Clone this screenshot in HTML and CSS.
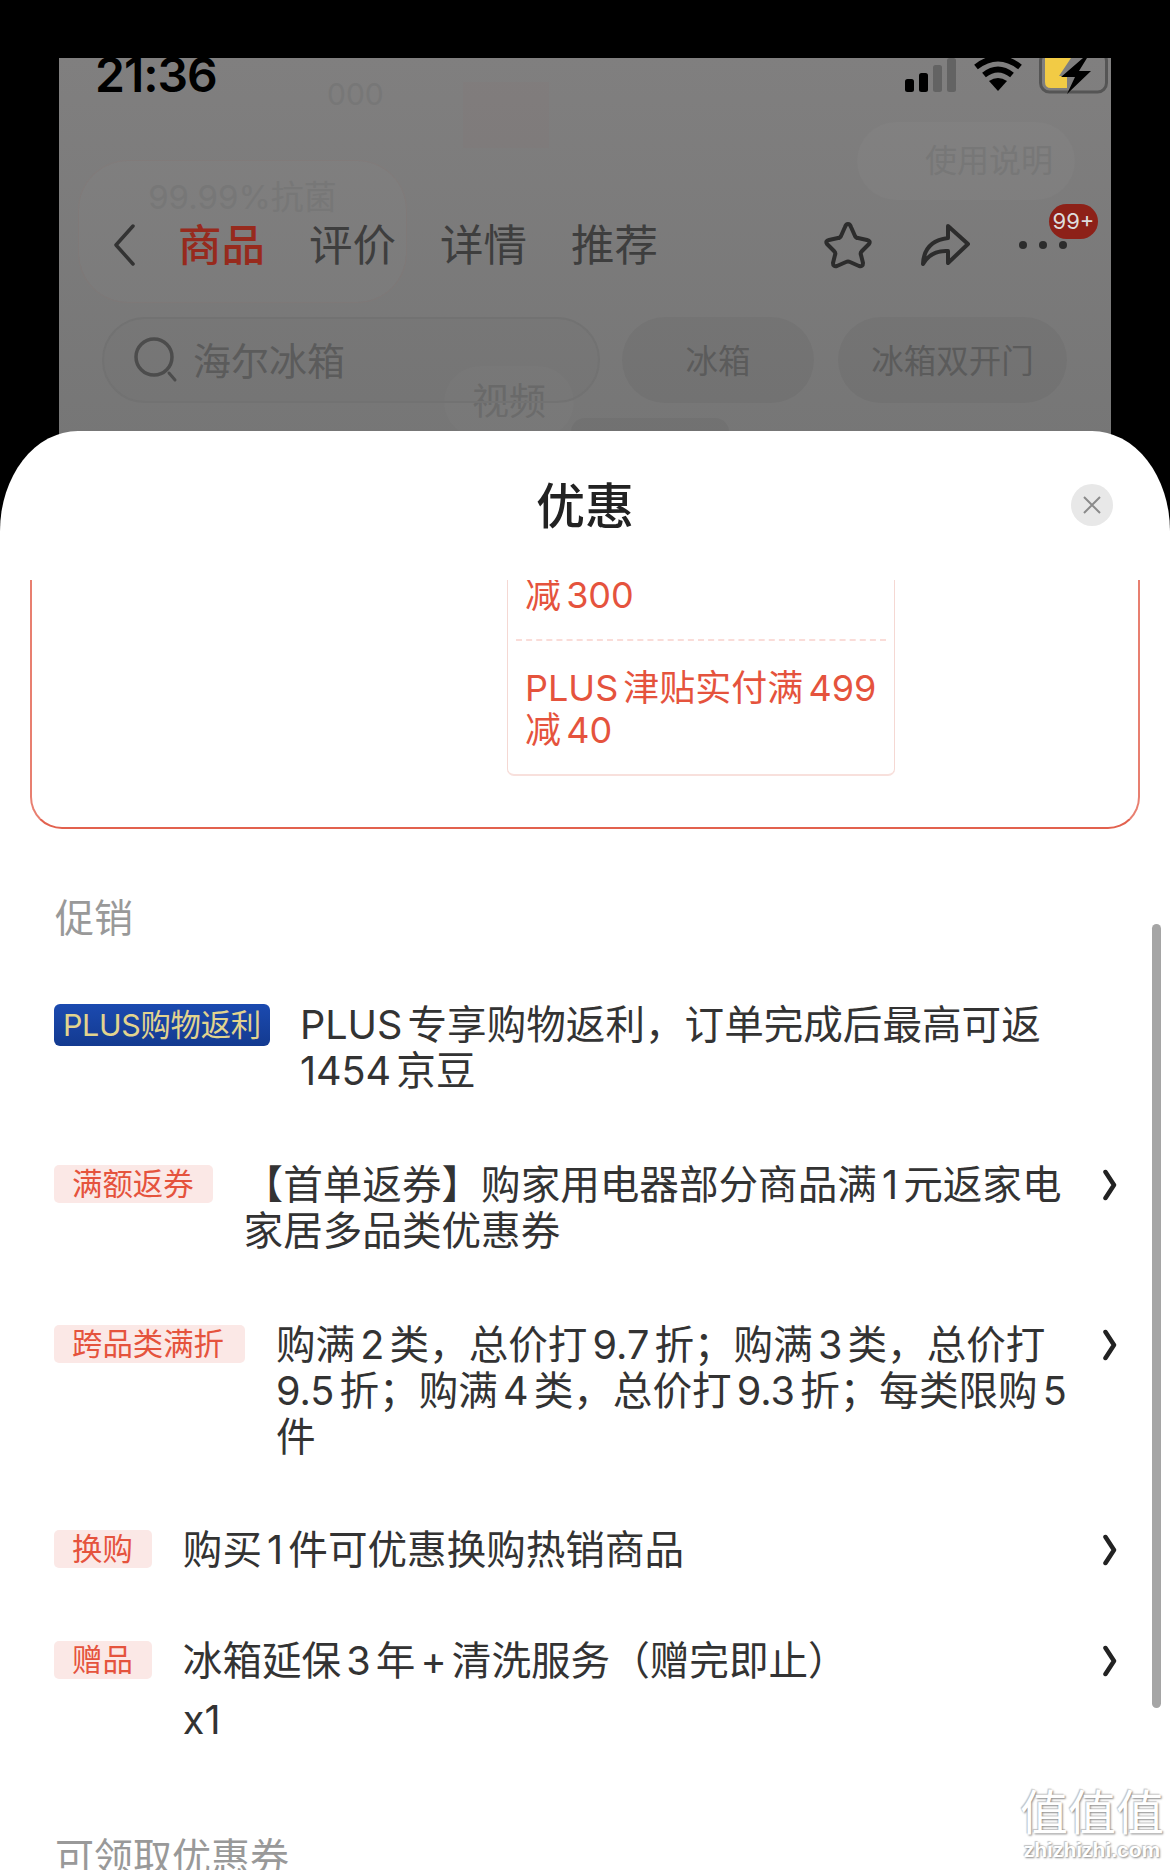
FILE: index.html
```html
<!DOCTYPE html>
<html lang="zh-CN">
<head>
    <meta charset="UTF-8">
    <meta name="viewport" content="width=device-width, initial-scale=1.0">
    <title>优惠</title>
    <link rel="stylesheet" href="styles.css">
</head>
<body>

<div class="backdrop">
    <div class="ghost ghost-left"><span>99.99%抗菌</span></div>
    <div class="ghost ghost-num">000</div>
    <div class="ghost ghost-box"></div>
    <div class="ghost ghost-pill"><span>使用说明</span></div>
    <div class="ghost ghost-video"><span>视频</span></div>
    <div class="ghost ghost-tab"></div>

    <div class="status-bar">
        <span class="time">21:36</span>
        <div class="status-icons">
            <svg class="signal" width="52" height="34" viewBox="0 0 52 34">
                <rect x="0" y="21" width="9" height="13" rx="2.5" fill="#000"/>
                <rect x="14" y="15" width="9" height="19" rx="2.5" fill="#000"/>
                <rect x="28" y="7" width="9" height="27" rx="2.5" fill="#636363"/>
                <rect x="42" y="0" width="9" height="34" rx="2.5" fill="#636363"/>
            </svg>
            <svg class="wifi" width="50" height="34" viewBox="0 0 50 34">
                <path d="M3 9 Q25 -8 47 9" fill="none" stroke="#000" stroke-width="6"/>
                <path d="M11 17 Q25 6 39 17" fill="none" stroke="#000" stroke-width="6"/>
                <path d="M16 23 Q25 17 34 23 L25 33 Z" fill="#000"/>
            </svg>
            <svg class="battery" width="70" height="36" viewBox="0 0 70 36">
                <rect x="1.5" y="-6" width="66" height="40" rx="9" fill="none" stroke="#555" stroke-width="3"/>
                <path d="M6 0 H32 L20 18 H28 V30 H12 Q6 30 6 24 Z" fill="#f2cb45"/>
                <path d="M44 0 L22 19 H36 L28 36 L52 13 H40 L48 0 Z" fill="#000"/>
            </svg>
        </div>
    </div>

    <div class="nav-bar">
        <svg class="nav-back" width="24" height="42" viewBox="0 0 24 42">
            <path d="M21 2 L4 21 L21 40" fill="none" stroke="#333" stroke-width="3.5" stroke-linecap="round" stroke-linejoin="round"/>
        </svg>
        <div class="nav-tabs">
            <span class="nav-tab active">商品</span>
            <span class="nav-tab">评价</span>
            <span class="nav-tab">详情</span>
            <span class="nav-tab">推荐</span>
        </div>
        <div class="nav-actions">
            <svg width="50" height="48" viewBox="0 0 50 48">
                <path d="M25 3 Q27 3 28 6 L32 15 Q33 17 35 17 L44 19 Q48 20 46 23 L39 30 Q37 32 38 34 L40 42 Q40 46 36 45 L27 41 Q25 40 23 41 L14 45 Q10 46 10 42 L12 34 Q13 32 11 30 L4 23 Q2 20 6 19 L15 17 Q17 17 18 15 L22 6 Q23 3 25 3 Z" fill="none" stroke="#2c2c2c" stroke-width="4" stroke-linejoin="round"/>
            </svg>
            <svg class="share" width="50" height="44" viewBox="0 0 50 44">
                <path d="M2 41 Q3 18 27 15 L27 3 L47 21 L27 40 L27 28 Q10 27 2 41 Z" fill="none" stroke="#2c2c2c" stroke-width="4" stroke-linejoin="round"/>
            </svg>
            <div class="more">
                <i></i><i></i><i></i>
                <span class="more-badge">99+</span>
            </div>
        </div>
    </div>

    <div class="search-row">
        <div class="search-box">
            <svg width="46" height="48" viewBox="0 0 46 48">
                <circle cx="21" cy="21" r="18" fill="none" stroke="#4c4c4c" stroke-width="3.5"/>
                <path d="M36 37 L42 44" fill="none" stroke="#4c4c4c" stroke-width="3" stroke-linecap="round"/>
            </svg>
            <span class="search-word">海尔冰箱</span>
        </div>
        <div class="chip chip-short">冰箱</div>
        <div class="chip chip-long">冰箱双开门</div>
    </div>
</div>

<div class="sheet">
    <div class="sheet-header">
        <h1>优惠</h1>
        <button class="close" type="button">
            <svg width="20" height="20" viewBox="0 0 20 20">
                <path d="M2 2 L18 18 M18 2 L2 18" fill="none" stroke="#8a8a8a" stroke-width="2"/>
            </svg>
        </button>
    </div>

    <div class="sheet-body">
        <div class="coupon-card">
            <div class="coupon-list">
                <p class="coupon-first">减 300</p>
                <p class="coupon-last">PLUS 津贴实付满 499<br>减 40</p>
            </div>
        </div>

        <div class="section-title">促销</div>

        <div class="promo-row">
            <span class="tag tag-plus">PLUS购物返利</span>
            <div class="promo-text">PLUS 专享购物返利，订单完成后最高可返<br>1454 京豆</div>
        </div>

        <div class="promo-row">
            <span class="tag">满额返券</span>
            <div class="promo-text">【首单返券】购家用电器部分商品满 1 元返家电<br>家居多品类优惠券</div>
            <svg class="arrow" width="14" height="32" viewBox="0 0 14 32"><path d="M2.5 3 L11 16 L2.5 29"/></svg>
        </div>

        <div class="promo-row">
            <span class="tag tag-wide">跨品类满折</span>
            <div class="promo-text">购满 2 类，总价打 9.7 折；购满 3 类，总价打<br>9.5 折；购满 4 类，总价打 9.3 折；每类限购 5<br>件</div>
            <svg class="arrow" width="14" height="32" viewBox="0 0 14 32"><path d="M2.5 3 L11 16 L2.5 29"/></svg>
        </div>

        <div class="promo-row promo-swap">
            <span class="tag">换购</span>
            <div class="promo-text">购买 1 件可优惠换购热销商品</div>
            <svg class="arrow" width="14" height="32" viewBox="0 0 14 32"><path d="M2.5 3 L11 16 L2.5 29"/></svg>
        </div>

        <div class="promo-row promo-gift">
            <span class="tag">赠品</span>
            <div class="promo-text">
                冰箱延保 3 年 + 清洗服务（赠完即止）
                <div class="promo-count">x1</div>
            </div>
            <svg class="arrow" width="14" height="32" viewBox="0 0 14 32"><path d="M2.5 3 L11 16 L2.5 29"/></svg>
        </div>

        <div class="section-title section-coupons">可领取优惠券</div>
    </div>

    <div class="scrollbar"></div>
    <div class="watermark">
        <span class="watermark-mark">值值值</span>
        <span class="watermark-url">zhizhizhi.com</span>
    </div>
</div>

</body>
</html>
```

FILE: styles.css
```css
html, body {
    margin: 0;
    padding: 0;
    height: 1870px;
    overflow: hidden;
}

body {
    width: 1170px;
    background: #000;
    font-family: "Inter", "Noto Sans CJK SC", sans-serif;
    color: #333;
}

.backdrop {
    position: relative;
    margin: 58px 59px 0;
    height: 382px;
    background: linear-gradient(180deg, #807f7f, #767676);
    overflow: hidden;
}

/* the faded product page behind the overlay */
.ghost {
    position: absolute;
    color: #777;
    background: rgba(255, 255, 255, 0.015);
}

.ghost-left {
    left: 19px;
    top: 102px;
    width: 329px;
    height: 143px;
    border: 1px solid rgba(150, 90, 80, 0.08);
    border-radius: 50px;
    font-size: 33px;
    text-align: center;
    padding-top: 10px;
    box-sizing: border-box;
}

.ghost-num {
    left: 268px;
    top: 18px;
    font-size: 30px;
    background: none;
}

.ghost-box {
    left: 404px;
    top: 24px;
    width: 86px;
    height: 66px;
    background: rgba(150, 70, 60, 0.03);
}

.ghost-pill {
    left: 798px;
    top: 64px;
    width: 218px;
    height: 78px;
    border-radius: 39px;
    font-size: 32px;
    line-height: 78px;
    text-align: right;
    padding-right: 22px;
    box-sizing: border-box;
    background: rgba(255, 255, 255, 0.025);
}

.ghost-video {
    left: 385px;
    top: 308px;
    width: 130px;
    height: 72px;
    border-radius: 36px;
    font-size: 37px;
    color: #6b6b6b;
    text-align: center;
    line-height: 72px;
}

.ghost-tab {
    left: 512px;
    top: 360px;
    width: 158px;
    height: 30px;
    border-radius: 14px 14px 0 0;
    background: rgba(0, 0, 0, 0.04);
}

/* status bar, clipped at the top like the screenshot */
.status-bar {
    position: relative;
    display: flex;
    justify-content: space-between;
    height: 34px;
    padding: 0 2px 0 36px;
}

.time {
    font-size: 48px;
    font-weight: 600;
    line-height: 34px;
    color: #000;
    letter-spacing: -1px;
}

.status-icons {
    display: flex;
    align-items: flex-start;
    gap: 16px;
}

.nav-bar {
    position: relative;
    display: flex;
    align-items: center;
    height: 60px;
    margin-top: 123px;
    padding-left: 53px;
}

.nav-tabs {
    display: flex;
    gap: 44px;
    margin-left: 42px;
}

.nav-tab {
    font-size: 43.5px;
    line-height: 60px;
    color: #3e3e3e;
}

.nav-tab.active {
    color: #972a1d;
    font-weight: 500;
}

.nav-actions {
    display: flex;
    align-items: center;
    gap: 47px;
    margin-left: 165px;
}

.share {
    margin-left: 1px;
}

.more {
    position: relative;
    display: flex;
    gap: 12px;
    margin-left: 1px;
}

.more i {
    width: 8px;
    height: 8px;
    border-radius: 50%;
    background: #2c2c2c;
}

.more-badge {
    position: absolute;
    left: 30px;
    top: -37px;
    width: 49px;
    height: 35px;
    border-radius: 18px;
    background: #8d2118;
    color: #ddd;
    font-size: 22px;
    line-height: 35px;
    text-align: center;
}

.search-row {
    position: relative;
    display: flex;
    margin-top: 42px;
    padding-left: 43px;
    height: 86px;
}

.search-box {
    display: flex;
    align-items: center;
    gap: 14px;
    width: 498px;
    box-sizing: border-box;
    padding-left: 29px;
    border: 2px solid #727272;
    border-radius: 43px;
    background: rgba(0, 0, 0, 0.015);
    font-size: 38px;
    color: #5b5b5b;
}

.search-word {
    padding-bottom: 4px;
}

.chip {
    height: 86px;
    border-radius: 43px;
    background: rgba(0, 0, 0, 0.04);
    color: #5b5b5b;
    font-size: 32.5px;
    line-height: 90px;
    text-align: center;
}

.chip-short {
    width: 192px;
    margin-left: 22px;
}

.chip-long {
    width: 229px;
    margin-left: 24px;
}

/* bottom sheet */
.sheet {
    position: relative;
    height: 1439px;
    margin-top: -9px;
    background: #fff;
    border-radius: 78px 78px 0 0 / 100px 100px 0 0;
    overflow: hidden;
}

.sheet-header {
    position: relative;
    display: flex;
    align-items: center;
    justify-content: center;
    height: 149px;
    padding-bottom: 6px;
    box-sizing: border-box;
}

h1 {
    margin: 0;
    font-size: 49px;
    font-weight: 500;
    color: #222;
}

.close {
    position: absolute;
    right: 57px;
    top: 53px;
    display: flex;
    align-items: center;
    justify-content: center;
    width: 42px;
    height: 42px;
    padding: 0;
    border: none;
    border-radius: 50%;
    background: #e8e8e8;
}

.sheet-body {
    height: 1290px;
    overflow: hidden;
}

.coupon-card {
    display: flex;
    justify-content: flex-end;
    height: 249px;
    box-sizing: border-box;
    margin: 0 30px;
    padding-right: 243px;
    border: 2px solid #e87f70;
    border-bottom-color: #e2614e;
    border-top: none;
    border-radius: 0 0 32px 32px;
}

.coupon-list {
    width: 388px;
    height: 196px;
    box-sizing: border-box;
    padding: 0 8px;
    border: 1px solid #f5d8d3;
    border-bottom: 2px solid #f8e0dc;
    border-top: none;
    border-radius: 0 0 7px 7px;
    color: #e5533d;
    font-size: 36px;
    line-height: 42px;
    word-spacing: -5px;
}

.coupon-list p {
    margin: 0;
    padding-left: 9px;
    white-space: nowrap;
}

.coupon-first {
    height: 61px;
    box-sizing: border-box;
    border-bottom: 2px dashed #fadcd8;
    margin: 0 -8px;
    line-height: 30px;
}

.coupon-last {
    padding-top: 26px !important;
}

.section-title {
    width: fit-content;
    margin: 66px 0 0 55px;
    font-size: 39px;
    line-height: 46px;
    color: #999;
}

.section-coupons {
    margin-top: 91px;
}

.promo-row {
    display: flex;
    align-items: flex-start;
    position: relative;
    margin: 68px 0 0 54px;
    padding-right: 54px;
    font-size: 39.6px;
    line-height: 46px;
    word-spacing: -6px;
    color: #333;
}

.section-title + .promo-row {
    margin-top: 61px;
}

.promo-swap {
    margin-top: 67px;
}

.promo-gift {
    margin-top: 65px;
}

.tag {
    flex-shrink: 0;
    height: 38px;
    margin: 3px 31px 0 0;
    padding: 0 19px 0 18px;
    border-radius: 5px;
    background: #fbe8e6;
    color: #e5533d;
    font-size: 30.4px;
    line-height: 38px;
    word-spacing: 0;
}

.tag-wide {
    padding-right: 21px;
}

.tag-plus {
    height: 42px;
    margin: 2px 30px 0 0;
    padding: 0 9px;
    border-radius: 6px;
    background: linear-gradient(180deg, #1b4ab0, #133a90);
    color: #e2d48e;
    font-size: 30.4px;
    line-height: 42px;
    letter-spacing: -0.3px;
}

.promo-text {
    flex: 1;
    white-space: nowrap;
}

.promo-count {
    margin-top: 13px;
}

.arrow {
    position: absolute;
    right: 53px;
    top: 7px;
    fill: none;
    stroke: #222;
    stroke-width: 4.5;
    stroke-linecap: round;
    stroke-linejoin: round;
}

.scrollbar {
    position: absolute;
    right: 9px;
    top: 493px;
    width: 9px;
    height: 784px;
    border-radius: 5px;
    background: #a5a5a5;
}

.watermark {
    position: absolute;
    right: 6px;
    bottom: 8px;
    display: flex;
    flex-direction: column;
    align-items: center;
    color: #fff;
    text-shadow: 1px 1px 2px #8a8a8a, -1px -1px 1px #c4c4c4;
}

.watermark-mark {
    font-size: 48px;
    line-height: 50px;
}

.watermark-url {
    font-size: 21px;
    line-height: 24px;
    font-family: "Liberation Sans", sans-serif;
    font-weight: 700;
}
```
